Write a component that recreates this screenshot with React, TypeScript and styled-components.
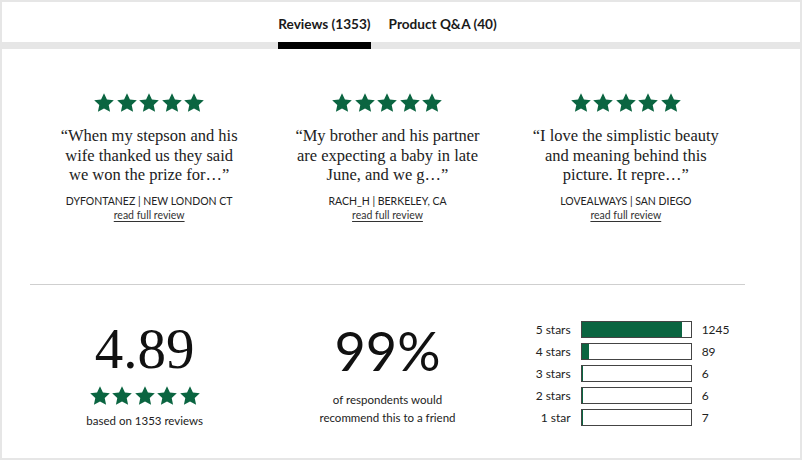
import React from 'react';
import styled, { createGlobalStyle } from 'styled-components';

// ---------------------------------------------------------------------------
// GLOBALS
// ---------------------------------------------------------------------------

const GlobalStyle = createGlobalStyle`
  html, body {
    margin: 0;
    padding: 0;
    background: #ffffff;
  }
  * {
    box-sizing: border-box;
  }
`;

const GREEN = '#0b6541';
const SANS = `Lato, "Open Sans", "Liberation Sans", sans-serif`;
const SERIF = `"Liberation Serif", "DejaVu Serif", serif`;

// ---------------------------------------------------------------------------
// STYLED COMPONENTS
// ---------------------------------------------------------------------------

const Frame = styled.div`
  width: 802px;
  height: 460px;
  border: 2px solid #e6e6e6;
  background: #fff;
  color: #1a1a1a;
  font-family: ${SANS};
  overflow: hidden;
`;

const TabBar = styled.div`
  display: flex;
  justify-content: center;
  gap: 18px;
  height: 47px;
  padding: 0 55px 0 28px;
  border-bottom: 7px solid #e6e6e6;
`;

const Tab = styled.div<{ $active?: boolean }>`
  display: flex;
  align-items: flex-start;
  padding-top: 14px;
  height: 47px;
  margin-bottom: -7px;
  font-size: 13.6px;
  font-weight: 700;
  color: #1a1a1a;
  border-bottom: 7px solid ${p => (p.$active ? '#000' : 'transparent')};
  white-space: nowrap;
`;

const Content = styled.div`
  padding: 0 55px 0 28px;
`;

const ReviewRow = styled.div`
  display: grid;
  grid-template-columns: repeat(3, 1fr);
  padding-top: 44px;
  padding-bottom: 62px;
  border-bottom: 1px solid #cfcfcf;
`;

const ReviewCard = styled.div`
  display: flex;
  flex-direction: column;
  align-items: center;
  text-align: center;
`;

const StarRow = styled.div<{ $size: number }>`
  display: flex;
  gap: 2.5px;
  height: ${p => p.$size}px;

  svg {
    width: ${p => p.$size}px;
    height: ${p => p.$size}px;
    fill: ${GREEN};
  }
`;

const Quote = styled.p`
  margin: 13px 0 0;
  width: 190px;
  font-family: ${SERIF};
  font-size: 16.5px;
  line-height: 19.5px;
  color: #222;
`;

const Author = styled.div`
  margin-top: 9px;
  font-size: 10.5px;
  line-height: 14px;
  text-transform: uppercase;
  color: #222;
`;

const ReadLink = styled.a`
  font-size: 10.5px;
  line-height: 14px;
  color: #333;
  text-decoration: underline;
  text-underline-offset: 2px;
`;

const SummaryRow = styled.div`
  display: grid;
  grid-template-columns: repeat(3, 1fr);
  padding-top: 36px;
`;

const SummaryBlock = styled.div<{ $offset?: number }>`
  display: flex;
  flex-direction: column;
  align-items: center;
  text-align: center;
  padding-right: ${p => p.$offset ?? 0}px;
`;

const BigScore = styled.div`
  margin-top: 0;
  font-family: ${SERIF};
  font-size: 57px;
  line-height: 56px;
  color: #111;
`;

const BigPercent = styled.div`
  margin-top: 2px;
  font-family: ${SANS};
  font-size: 54px;
  line-height: 56px;
  color: #111;
`;

const StarsBox = styled.div`
  margin-top: 9px;
`;

const SmallNote = styled.div<{ $top: number }>`
  margin-top: ${p => p.$top}px;
  font-size: 11.5px;
  line-height: 18px;
  color: #222;
`;

const Histogram = styled.div`
  display: grid;
  grid-template-columns: 45px 111px 40px;
  column-gap: 10px;
  row-gap: 5px;
  align-items: center;
  margin-left: 19px;
  align-self: start;
`;

const BarLabel = styled.div`
  font-size: 12px;
  text-align: right;
  color: #222;
`;

const BarTrack = styled.div`
  height: 17px;
  border: 1.5px solid #444;
  background: #fff;
  overflow: hidden;
`;

const BarFill = styled.div`
  height: 100%;
  background: ${GREEN};
`;

const BarCount = styled.div`
  font-size: 12px;
  color: #222;
`;

// ---------------------------------------------------------------------------
// DATA
// ---------------------------------------------------------------------------

const reviews = [
  {
    quote: '\u201cWhen my stepson and his wife thanked us they said we won the prize for\u2026\u201d',
    author: 'dyfontanez | New London CT',
  },
  {
    quote: '\u201cMy brother and his partner are expecting a baby in late June, and we g\u2026\u201d',
    author: 'Rach_H | Berkeley, CA',
  },
  {
    quote: '\u201cI love the simplistic beauty and meaning behind this picture. It repre\u2026\u201d',
    author: 'Lovealways | San Diego',
  },
];

const histogram = [
  { label: '5 stars', count: 1245 },
  { label: '4 stars', count: 89 },
  { label: '3 stars', count: 6 },
  { label: '2 stars', count: 6 },
  { label: '1 star', count: 7 },
];

const TOTAL = 1353;

// ---------------------------------------------------------------------------
// COMPONENTS
// ---------------------------------------------------------------------------

const Star = () => (
  <svg viewBox="1.6 1.4 20.8 20.8" aria-hidden="true">
    <path d="M12 1.6l3.05 6.55 7.15.85-5.3 4.9 1.42 7.1L12 17.45 5.68 21l1.42-7.1L1.8 9l7.15-.85z" />
  </svg>
);

const Stars: React.FC<{ size: number }> = ({ size }) => (
  <StarRow $size={size}>
    {[0, 1, 2, 3, 4].map(i => (
      <Star key={i} />
    ))}
  </StarRow>
);

export default function App() {
  return (
    <>
      <GlobalStyle />
      <Frame>
        <TabBar>
          <Tab $active>Reviews (1353)</Tab>
          <Tab>Product Q&amp;A (40)</Tab>
        </TabBar>

        <Content>
          <ReviewRow>
            {reviews.map(r => (
              <ReviewCard key={r.author}>
                <Stars size={20} />
                <Quote>{r.quote}</Quote>
                <Author>{r.author}</Author>
                <ReadLink href="#">read full review</ReadLink>
              </ReviewCard>
            ))}
          </ReviewRow>

          <SummaryRow>
            <SummaryBlock $offset={9}>
              <BigScore>4.89</BigScore>
              <StarsBox>
                <Stars size={20} />
              </StarsBox>
              <SmallNote $top={6}>based on 1353 reviews</SmallNote>
            </SummaryBlock>

            <SummaryBlock>
              <BigPercent>99%</BigPercent>
              <SmallNote $top={12}>
                of respondents would
                <br />
                recommend this to a friend
              </SmallNote>
            </SummaryBlock>

            <Histogram>
              {histogram.map(h => (
                <React.Fragment key={h.label}>
                  <BarLabel>{h.label}</BarLabel>
                  <BarTrack>
                    <BarFill style={{ width: `${(h.count / TOTAL) * 100}%` }} />
                  </BarTrack>
                  <BarCount>{h.count}</BarCount>
                </React.Fragment>
              ))}
            </Histogram>
          </SummaryRow>
        </Content>
      </Frame>
    </>
  );
}
